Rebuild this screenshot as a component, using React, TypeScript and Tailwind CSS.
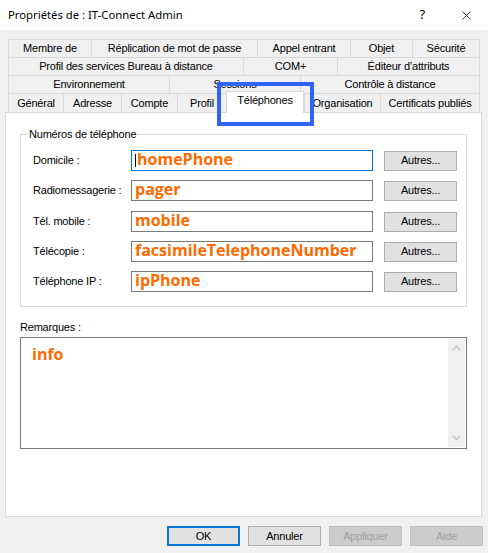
import { X } from 'lucide-react';

type Tab = [string, number];

const tabRows: Tab[][] = [
  [['Membre de', 83], ['Réplication de mot de passe', 166], ['Appel entrant', 93], ['Objet', 62], ['Sécurité', 68]],
  [['Profil des services Bureau à distance', 235], ['COM+', 94], ['Éditeur d\u2019attributs', 143]],
  [['Environnement', 161], ['Sessions', 131], ['Contrôle à distance', 180]],
  [['Général', 55], ['Adresse', 58], ['Compte', 56], ['Profil', 49], ['Téléphones', 78], ['Organisation', 76], ['Certificats publiés', 100]],
];

const phones = [
  { label: 'Domicile :', value: 'homePhone', focused: true },
  { label: 'Radiomessagerie :', value: 'pager' },
  { label: 'Tél. mobile :', value: 'mobile' },
  { label: 'Télécopie :', value: 'facsimileTelephoneNumber' },
  { label: 'Téléphone IP :', value: 'ipPhone' },
];

function DlgButton({ label, primary, disabled }: { label: string; primary?: boolean; disabled?: boolean }) {
  return (
    <div
      className={
        'w-[73px] h-[20px] flex items-center justify-center ' +
        (primary
          ? 'border-2 border-[#0078d7] bg-[#e1e1e1] text-black'
          : disabled
          ? 'border border-[#bfbfbf] bg-[#cccccc] text-[#a0a0a0]'
          : 'border border-[#adadad] bg-[#e1e1e1] text-black')
      }
    >
      {label}
    </div>
  );
}

export default function App() {
  return (
    <div className="w-[488px] h-[553px] bg-[#f0f0f0] flex flex-col overflow-hidden font-['Liberation_Sans',Arial,sans-serif] text-[11px] tracking-[-0.2px] text-black">
      {/* title bar */}
      <div className="h-[30px] bg-white flex items-center pl-[8px] pr-[14px]">
        <span className="font-['Noto_Sans',sans-serif] text-[11.3px] tracking-normal flex-1">Propriétés de : IT-Connect Admin</span>
        <span className="font-['Noto_Sans',sans-serif] text-[13px] mr-[34px]">?</span>
        <X className="w-[15px] h-[15px]" strokeWidth={1.2} />
      </div>

      {/* tabs */}
      <div className="relative mt-[9px] ml-[8px] w-[472px] flex flex-col">
        {tabRows.map((row, ri) => (
          <div key={ri} className="flex">
            {row.map(([name, w], ti) => {
              const selected = name === 'Téléphones';
              const last = ti === row.length - 1;
              return (
                <div
                  key={name}
                  style={{ width: w }}
                  className={
                    'flex items-center justify-center whitespace-nowrap border-t border-l border-[#d9d9d9] ' +
                    (last ? 'border-r ' : '') +
                    (ri === 3 ? 'h-[19px] ' : 'h-[18px] ') +
                    (selected ? 'relative z-10 -mt-[2px] h-[22px] bg-white border-r pb-[4px]' : 'bg-[#f0f0f0]')
                  }
                >
                  {name}
                </div>
              );
            })}
          </div>
        ))}
        {/* highlight annotation */}
        <div className="absolute left-[209px] top-[43px] w-[97px] h-[44px] border-[4px] border-[#2f64f5] z-20 pointer-events-none" />
      </div>

      {/* panel */}
      <div className="ml-[5px] w-[477px] h-[405px] -mt-[1px] border border-[#d9d9d9] bg-white px-[14px] pt-[14px] flex flex-col">
        <fieldset className="w-[447px] h-[180px] border border-[#dcdcdc] pl-[12px]">
          <legend className="-ml-[6px] px-[2px] leading-[14px]">Numéros de téléphone</legend>
          <div className="flex flex-col mt-[9px]">
            {phones.map((p, i) => (
              <div key={p.label} className={'flex items-center h-[21px] ' + (i === 0 ? '' : i === 2 ? 'mt-[10px]' : 'mt-[9px]')}>
                <div className="w-[98px] whitespace-nowrap">{p.label}</div>
                <div
                  className={
                    'relative w-[242px] h-[21px] border bg-white flex items-center pl-[3px] tracking-normal ' +
                    (p.focused ? 'border-[#0078d7]' : 'border-[#7a7a7a]')
                  }
                >
                  {p.focused && <div className="w-px h-[13px] bg-black mr-[1px]" />}
                  <span className="font-['Open_Sans',sans-serif] font-bold text-[16px] leading-[16px] text-[#ff6a00] -mt-[3px]">
                    {p.value}
                  </span>
                </div>
                <div className="ml-[11px]">
                  <div className="w-[73px] h-[20px] border border-[#adadad] bg-[#e1e1e1] flex items-center justify-center">
                    Autres...
                  </div>
                </div>
              </div>
            ))}
          </div>
        </fieldset>

        <div className="mt-[13px] leading-[14px]">Remarques :</div>
        <div className="mt-[3px] w-[447px] h-[112px] border border-[#7a7a7a] flex">
          <div className="flex-1 pl-[11px] pt-[8px] tracking-normal">
            <span className="font-['Open_Sans',sans-serif] font-bold text-[16px] leading-[16px] text-[#ff6a00]">info</span>
          </div>
          <div className="w-[17px] bg-[#f0f0f0] flex flex-col items-center justify-between py-[6px] mr-px my-px">
            <svg width="9" height="6" viewBox="0 0 9 6">
              <path d="M1 5 L4.5 1.5 L8 5" fill="none" stroke="#c2c2c2" strokeWidth="1.5" />
            </svg>
            <svg width="9" height="6" viewBox="0 0 9 6">
              <path d="M1 1 L4.5 4.5 L8 1" fill="none" stroke="#c2c2c2" strokeWidth="1.5" />
            </svg>
          </div>
        </div>
      </div>

      {/* dialog buttons */}
      <div className="mt-[9px] flex justify-end gap-[8px] pr-[5px]">
        <DlgButton label="OK" primary />
        <DlgButton label="Annuler" />
        <DlgButton label="Appliquer" disabled />
        <DlgButton label="Aide" disabled />
      </div>
    </div>
  );
}
